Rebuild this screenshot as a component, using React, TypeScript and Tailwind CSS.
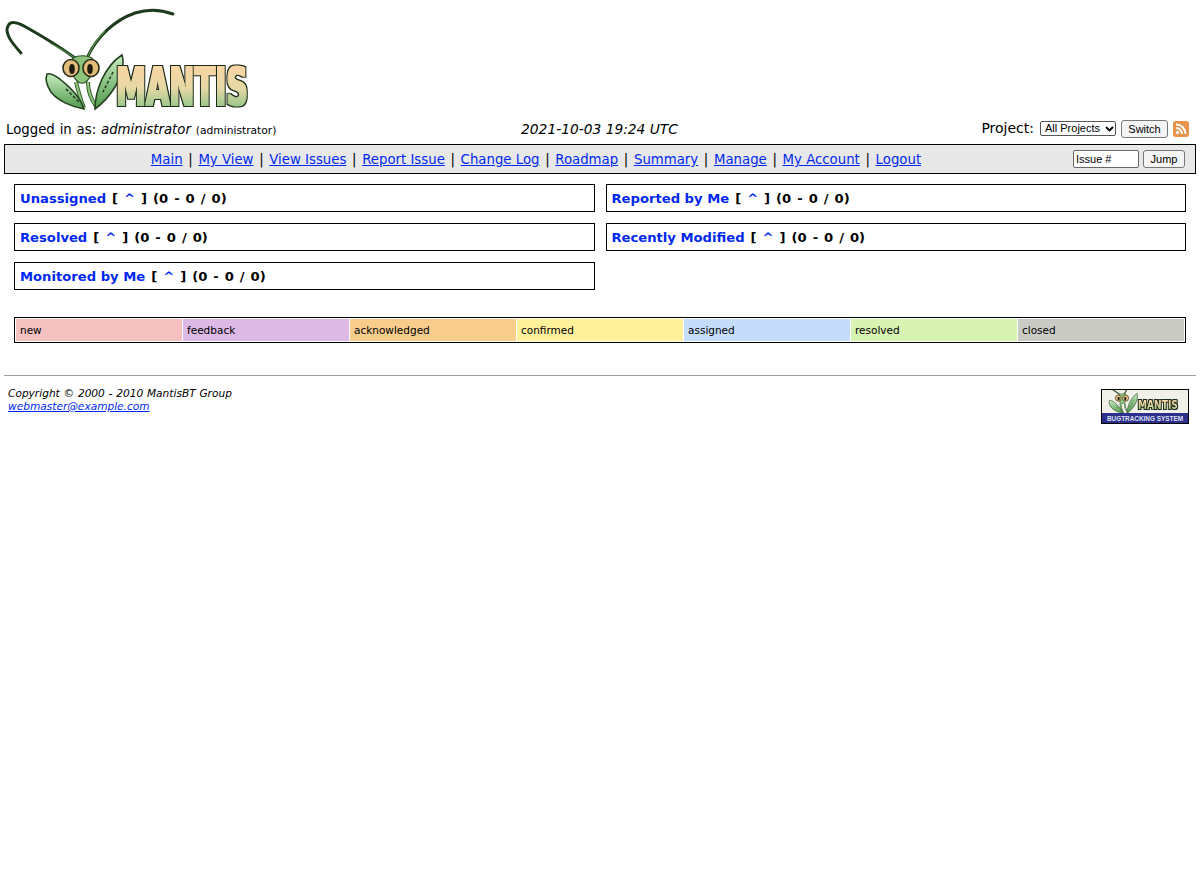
const font = "font-['DejaVu_Sans',Verdana,sans-serif]";

function MantisBody() {
	return (
		<g>
			<path d="M21 53C12 43 4 33 8 26C10 21 17 22 24 26C42 36 60 47 75 58" fill="none" stroke="#1d3a1d" strokeWidth="3" strokeLinecap="round" />
			<path d="M50 43C60 48 68 53 75 58" fill="none" stroke="#4f8a45" strokeWidth="1.2" />
			<path d="M87 58C97 36 115 20 135 13C148 9 162 10 173 14" fill="none" stroke="#1d3a1d" strokeWidth="3" strokeLinecap="round" />
			<path d="M87 58C92 47 98 38 105 31" fill="none" stroke="#4f8a45" strokeWidth="1.2" />
			<path d="M76 82C78 90 80 98 84 108M88 82C88 90 90 98 96 106" fill="none" stroke="#35602f" strokeWidth="4" />
			<path d="M76 82C78 90 80 98 84 108M88 82C88 90 90 98 96 106" fill="none" stroke="#8cc47c" strokeWidth="2" />
			<path d="M47 74C54 72 66 84 72 90C78 96 82 103 84 109C72 107 58 101 51 92C47 86 45 79 47 74Z" fill="url(#leaf)" stroke="#24401f" strokeWidth="1.6" />
			<path d="M122 55C125 64 121 78 115 87C110 95 102 104 95 109C95 100 97 90 102 79C107 69 114 60 122 55Z" fill="url(#leaf)" stroke="#24401f" strokeWidth="1.6" />
			<path d="M66 89L80 103M113 72L103 92" fill="none" stroke="#20381c" strokeWidth="1.5" strokeDasharray="3 2" />
			<path d="M73 58C78 55 87 55 92 58C97 66 92 76 87 81C84 84 80 84 77 81C72 76 67 66 73 58Z" fill="#8cc47c" stroke="#2c4c28" strokeWidth="1.2" />
			<ellipse cx="71" cy="68" rx="8" ry="8.5" fill="#e2bd7a" stroke="#2d2a18" strokeWidth="1.6" />
			<ellipse cx="91" cy="68" rx="8" ry="8.5" fill="#e2bd7a" stroke="#2d2a18" strokeWidth="1.6" />
			<ellipse cx="72" cy="69" rx="2.8" ry="5" fill="#1d1a10" />
			<ellipse cx="90" cy="69" rx="2.8" ry="5" fill="#1d1a10" />
		</g>
	);
}

function Defs({ id, fat, outline, grow }: { id: string; fat: string; outline: number; grow: number }) {
	return (
		<defs>
			<linearGradient id="leaf" x1="0" y1="0" x2="0" y2="1">
				<stop offset="0" stopColor="#c8ecc0" />
				<stop offset="1" stopColor="#4f9a4c" />
			</linearGradient>
			<linearGradient id={id} x1="0" y1="0" x2="0" y2="1">
				<stop offset="0.15" stopColor="#f7d4a4" />
				<stop offset="0.5" stopColor="#e6d8a4" />
				<stop offset="0.85" stopColor="#8fc488" />
			</linearGradient>
			<filter id={fat} x="-5%" y="-10%" width="110%" height="120%" colorInterpolationFilters="sRGB">
				<feMorphology in="SourceGraphic" operator="dilate" radius={grow} result="f" />
				<feMorphology in="f" operator="dilate" radius={outline} result="o" />
				<feFlood floodColor="#1c2a18" />
				<feComposite in2="o" operator="in" result="d" />
				<feMerge>
					<feMergeNode in="d" />
					<feMergeNode in="f" />
				</feMerge>
			</filter>
		</defs>
	);
}

function Logo() {
	return (
		<svg width="260" height="118" viewBox="0 0 260 118" className="block">
			<Defs id="word" fat="fat" outline={1.4} grow={0.8} />
			<MantisBody />
			<g filter="url(#fat)">
				<text transform="translate(116 105) scale(0.58 1)" fontFamily="DejaVu Sans" fontWeight="bold" fontSize="52" fill="url(#word)">
					MANTIS
				</text>
			</g>
		</svg>
	);
}

function SmallLogo() {
	return (
		<div className="w-[88px] h-[35px] border border-black bg-[#f1f1ea] flex flex-col overflow-hidden">
			<svg width="86" height="23" viewBox="0 0 86 23" className="block shrink-0">
				<Defs id="wordSmall" fat="fatSmall" outline={0.5} grow={0.3} />
				<g transform="translate(-10 -17) scale(0.37)">
					<MantisBody />
				</g>
				<g filter="url(#fatSmall)">
					<text transform="translate(36 19) scale(0.7 1)" fontFamily="DejaVu Sans" fontWeight="bold" fontSize="13" fill="url(#wordSmall)">
						MANTIS
					</text>
				</g>
			</svg>
			<div className="flex-1 bg-[#2d2f8c] text-[#dfe2f5] text-[6.4px] font-bold leading-[11px] text-center font-['Liberation_Sans',sans-serif] whitespace-nowrap">
				BUGTRACKING SYSTEM
			</div>
		</div>
	);
}

function RssIcon() {
	return (
		<svg width="16" height="16" viewBox="0 0 16 16" className="block">
			<rect width="16" height="16" rx="3" fill="#e8924a" />
			<circle cx="4.5" cy="11.5" r="1.7" fill="#fff" />
			<path d="M3 7a6 6 0 0 1 6 6" fill="none" stroke="#fff" strokeWidth="2" />
			<path d="M3 3.5A9.5 9.5 0 0 1 12.5 13" fill="none" stroke="#fff" strokeWidth="2" />
		</svg>
	);
}

const menuItems = ["Main", "My View", "View Issues", "Report Issue", "Change Log", "Roadmap", "Summary", "Manage", "My Account", "Logout"];

const boxes = [
	["Unassigned", "Reported by Me"],
	["Resolved", "Recently Modified"],
	["Monitored by Me", ""],
];

const legend = [
	["new", "bg-[#f4c0c0]"],
	["feedback", "bg-[#ddb9e6]"],
	["acknowledged", "bg-[#f8cd8c]"],
	["confirmed", "bg-[#fff19c]"],
	["assigned", "bg-[#c6dcfb]"],
	["resolved", "bg-[#d9f3b2]"],
	["closed", "bg-[#cbcbc6]"],
];

function Box({ title }: { title: string }) {
	return (
		<div className="h-7 border border-black pl-[5px] pt-[2px] flex items-center text-[13.15px] font-bold whitespace-pre text-black [word-spacing:1.4px]">
			<a href="#" className="text-[#0028f0] [word-spacing:0px]">{title}</a>
			{" [ "}
			<a href="#" className="text-[#0028f0]">^</a>
			{" ] (0 - 0 / 0)"}
		</div>
	);
}

export default function App() {
	return (
		<div className={`${font} bg-white text-black min-h-[890px] text-[13.3px]`}>
			<div className="h-[118px]">
				<Logo />
			</div>
			<div className="flex items-center justify-between h-[21px] pl-[6px] pr-[11px] mb-[5px]">
				<div className="w-[400px] whitespace-nowrap pt-[2px] [word-spacing:0.6px]">
					Logged in as: <em>administrator</em> <span className="text-[10.7px]">(administrator)</span>
				</div>
				<div className="italic text-[13.8px] pt-[2px] pl-[4px]">2021-10-03 19:24 UTC</div>
				<div className="w-[400px] flex items-center justify-end gap-[5px]">
					<span className="mr-[1px] text-[14px]">Project:</span>
					<div className="relative">
						<select className="appearance-none block w-[76px] h-[15px] border border-[#555] rounded-[2px] bg-white pl-[4px] text-[11px] leading-[13px] font-['Liberation_Sans',sans-serif]">
							<option>All Projects</option>
						</select>
						<svg width="9" height="6" viewBox="0 0 9 6" className="absolute right-[2px] top-[5px]">
							<path d="M1 1l3.5 3.5L8 1" fill="none" stroke="#000" strokeWidth="1.8" />
						</svg>
					</div>
					<button className="w-[47px] h-[18px] border border-[#777] rounded-[3px] bg-[#f4f4f4] text-[11px] font-['Liberation_Sans',sans-serif]">Switch</button>
					<RssIcon />
				</div>
			</div>
			<div className="mx-1 h-[30px] border border-black bg-[#e8e8e8] flex items-center relative">
				<div className="flex-1 flex justify-center pr-[128px] pt-[2px] whitespace-pre">
					{menuItems.map((item, i) => (
						<span key={item}>
							{i > 0 && <span className="px-[5.65px]">|</span>}
							<a href="#" className="text-[#0028f0] underline">{item}</a>
						</span>
					))}
				</div>
				<div className="absolute right-[10px] top-[5px] flex gap-1">
					<input defaultValue="Issue #" className="w-[66px] h-[18px] border border-[#666] rounded-[2px] bg-white pl-[2px] text-[11px] font-['Liberation_Sans',sans-serif]" />
					<button className="w-[42px] h-[18px] border border-[#777] rounded-[3px] bg-[#f4f4f4] text-[11px] font-['Liberation_Sans',sans-serif]">Jump</button>
				</div>
			</div>
			<div className="mt-[10px] mx-[14px] grid grid-cols-2 gap-[11px]">
				{boxes.flat().map((title, i) => (title ? <Box key={title} title={title} /> : <div key={i} />))}
			</div>
			<div className="mt-[27px] mx-[14px] h-[26px] border border-black p-[1px] flex gap-[1px]">
				{legend.map(([name, color]) => (
					<div key={name} className={`flex-1 ${color} pl-1 text-[10.5px] leading-[23px]`}>{name}</div>
				))}
			</div>
			<div className="mt-8 mx-1 border-t border-[#a0a0a0] flex justify-between pt-[11px] pl-1 pr-[7px]">
				<div className="italic text-[10.6px] leading-[13px]">
					<div className="[word-spacing:0.4px]">Copyright © 2000 - 2010 MantisBT Group</div>
					<a href="#" className="text-[#0028f0] underline">webmaster@example.com</a>
				</div>
				<div className="mt-[2px]">
					<SmallLogo />
				</div>
			</div>
		</div>
	);
}
